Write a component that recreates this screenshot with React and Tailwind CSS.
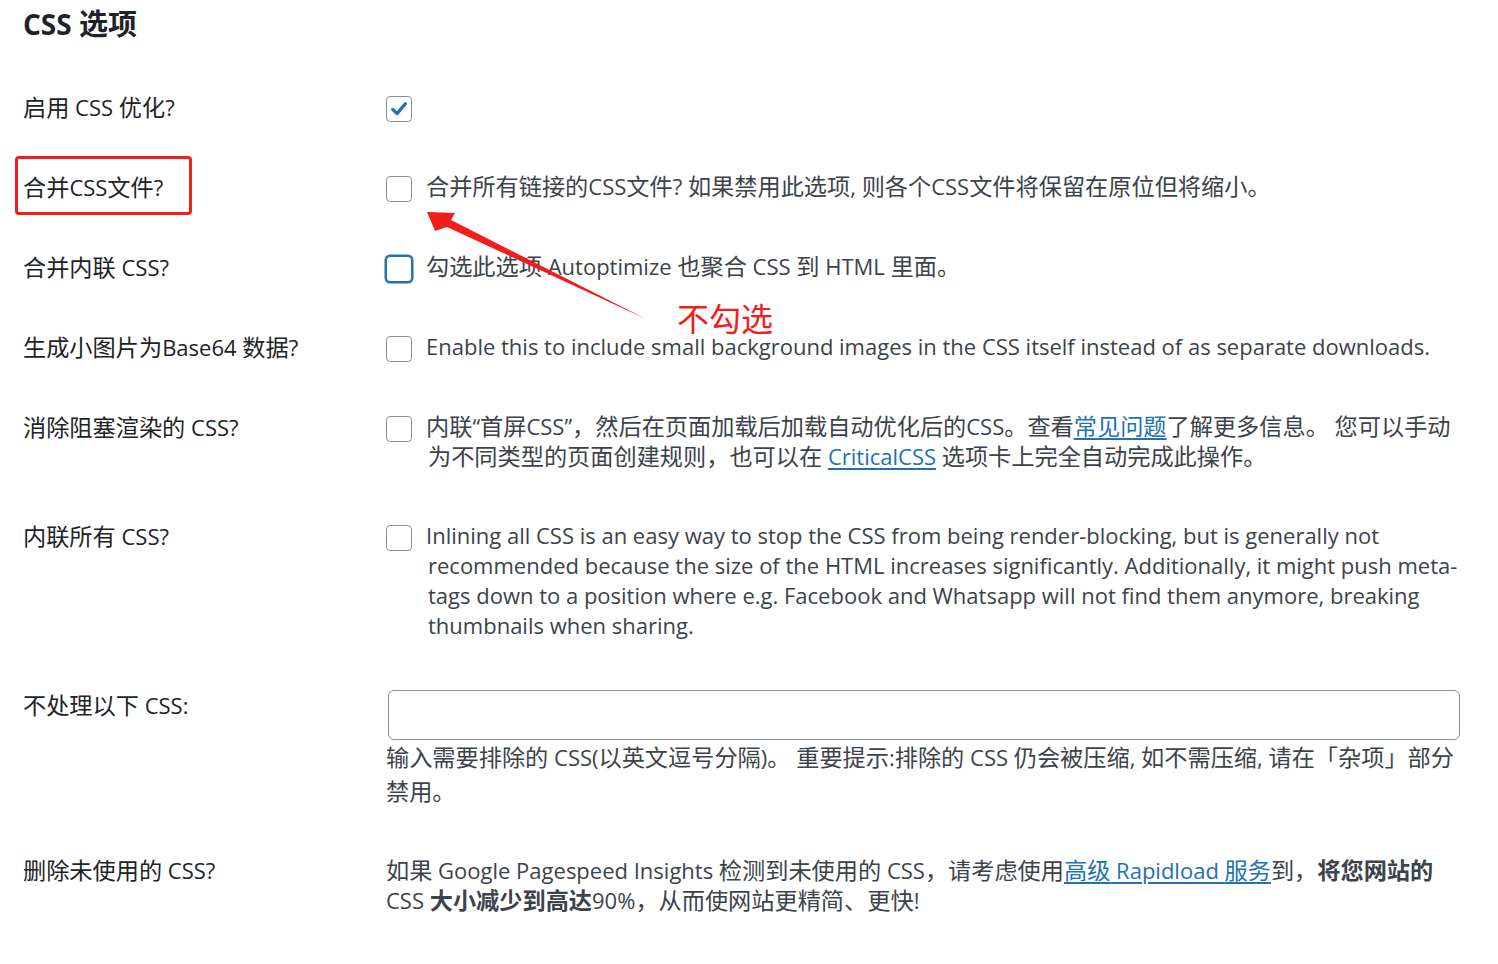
const font = { fontFamily: '"Open Sans", "Noto Sans CJK SC", sans-serif' };

// CJK runs are set a touch larger, the reference's CJK face is wider than Noto's
function Z({ children }) {
  const parts = String(children).split(/([\u3000-\u303f\u3400-\u9fff\uff01-\uffef]+)/);
  return parts.map((p, i) =>
    i % 2 ? (
      <span key={i} className="text-[23.2px]">{p}</span>
    ) : (
      p
    )
  );
}

function Box({ checked, focus }) {
  return (
    <span
      className={
        "relative inline-block w-[26px] h-[26px] shrink-0 rounded-[4px] border bg-white " +
        (focus ? "border-[#2271b1] shadow-[0_0_0_1.5px_#2271b1]" : "border-[#8c8f94]")
      }
    >
      {checked && (
        <svg viewBox="0 0 20 20" className="absolute left-[1px] top-[1px] w-[22px] h-[22px]">
          <path d="M4.3 10.4 L8.2 14.2 L15.8 5.2" fill="none" stroke="#2271b1" strokeWidth="3" strokeLinecap="round" strokeLinejoin="round" />
        </svg>
      )}
    </span>
  );
}

function Row({ label, children }) {
  return (
    <div className="grid grid-cols-[363px_1fr] py-[25px]">
      <div className="text-[#1d2327] leading-[30px]"><Z>{label}</Z></div>
      <div className="text-[#3c434a] leading-[30px]">{children}</div>
    </div>
  );
}

function Check({ checked, focus, children }) {
  return (
    <div className="flex items-start">
      <div className="h-[30px] flex items-center pt-[3px]">
        <Box checked={checked} focus={focus} />
      </div>
      {children && <div className="ml-[14px] -mt-[1px]">{children}</div>}
    </div>
  );
}

const A = ({ children }) => <a className="text-[#2271b1] underline underline-offset-[3px]"><Z>{children}</Z></a>;

export default function App() {
  return (
    <div className="relative w-[1498px] h-[964px] bg-white text-[22px] px-[23px] overflow-hidden" style={font}>
      <h2 className="text-[28px] font-bold text-[#1d2327] leading-[36px] pt-[6px] h-[67px]">
        CSS <span className="text-[29px]">选项</span>
      </h2>

      <Row label="启用 CSS 优化?">
        <Check checked />
      </Row>
      <Row label="合并CSS文件?">
        <Check><Z>合并所有链接的CSS文件? 如果禁用此选项, 则各个CSS文件将保留在原位但将缩小。</Z></Check>
      </Row>
      <Row label="合并内联 CSS?">
        <Check focus><Z>勾选此选项 Autoptimize 也聚合 CSS 到 HTML 里面。</Z></Check>
      </Row>
      <Row label="生成小图片为Base64 数据?">
        <Check>Enable this to include small background images in the CSS itself instead of as separate downloads.</Check>
      </Row>
      <Row label="消除阻塞渲染的 CSS?">
        <Check>
          <Z>内联</Z>“<Z>首屏CSS</Z>”<Z>，然后在页面加载后加载自动优化后的CSS。查看</Z><A>常见问题</A><Z>了解更多信息。 您可以手动</Z>
          <br />
          <span className="ml-[2px]" />
          <Z>为不同类型的页面创建规则，也可以在 </Z><A>CriticalCSS</A><Z> 选项卡上完全自动完成此操作。</Z>
        </Check>
      </Row>
      <Row label="内联所有 CSS?">
        <Check>
          Inlining all CSS is an easy way to stop the CSS from being render-blocking, but is generally not
          <br />
          <span className="ml-[2px]" />
          recommended because the size of the HTML increases significantly. Additionally, it might push meta-
          <br />
          <span className="ml-[2px]" />
          tags down to a position where e.g. Facebook and Whatsapp will not find them anymore, breaking
          <br />
          <span className="ml-[2px]" />
          thumbnails when sharing.
        </Check>
      </Row>
      <div className="grid grid-cols-[363px_1fr] pt-[25px] pb-[22px]">
        <div className="text-[#1d2327] leading-[30px]"><Z>不处理以下 CSS:</Z></div>
        <div className="text-[#3c434a]">
          <div className="h-[50px] w-[1072px] ml-[2px] rounded-[6px] border border-[#8c8f94] bg-white" />
          <p className="leading-[34px]">
            <Z>输入需要排除的 CSS(以英文逗号分隔)。 重要提示:排除的 CSS 仍会被压缩, 如不需压缩, 请在「杂项」部分</Z>
            <br />
            <Z>禁用。</Z>
          </p>
        </div>
      </div>
      <Row label="删除未使用的 CSS?">
        <div>
          <Z>如果 Google Pagespeed Insights 检测到未使用的 CSS，请考虑使用</Z><A>高级 Rapidload 服务</A><Z>到，</Z>
          <b className="font-bold"><Z>将您网站的</Z></b>
          <br />
          CSS <b className="font-bold"><Z>大小减少到高达</Z></b>90%<Z>，从而使网站更精简、更快</Z>!
        </div>
      </Row>

      {/* annotations */}
      <div className="absolute left-[15px] top-[156px] w-[177px] h-[59px] border-[3px] border-[#f31d1d] rounded-[4px]" />
      <svg className="absolute left-0 top-0 pointer-events-none" width="1498" height="964">
        <polygon points="427,212 455,213 451,220 646,319 447,227 435,231" fill="#f31d1d" />
      </svg>
      <div className="absolute left-[677px] top-[297px] text-[32px] leading-[44px] text-[#f31d1d]">不勾选</div>
    </div>
  );
}
